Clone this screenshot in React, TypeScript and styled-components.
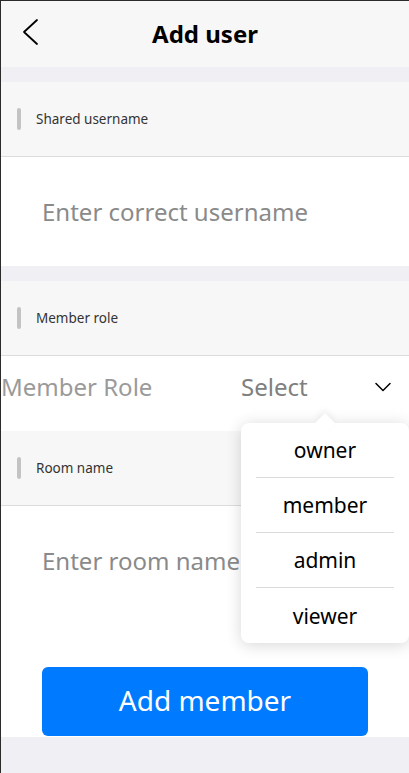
import React from "react";
import styled, { createGlobalStyle } from "styled-components";

const Global = createGlobalStyle`
  html, body { margin: 0; padding: 0; background: #ffffff; }
  body { font-family: "Noto Sans", "Open Sans", sans-serif; }
  * { box-sizing: border-box; }
`;

const Page = styled.div`
  width: 409px;
  height: 773px;
  display: flex;
  flex-direction: column;
  border-left: 1px solid #2b2b2b;
  border-top: 1px solid #2b2b2b;
  background: #efeff4;
  overflow: hidden;
`;

const Header = styled.header`
  height: 66px;
  flex: none;
  background: #f7f7f7;
  display: grid;
  grid-template-columns: 60px 1fr 60px;
  align-items: center;
`;

const BackButton = styled.button`
  border: none;
  background: none;
  padding: 0 0 0 20px;
  height: 100%;
  display: flex;
  align-items: center;
  margin-top: -4px;
`;

const Title = styled.h1`
  margin: 0;
  text-align: center;
  font-size: 24px;
  font-weight: 700;
  color: #000;
  margin-top: -1px;
`;

const Gap = styled.div`
  height: 15px;
  flex: none;
  background: #efeff4;
`;

const SectionHeader = styled.div`
  height: 75px;
  flex: none;
  background: #f7f7f7;
  border-bottom: 1px solid #dcdcdc;
  display: flex;
  align-items: center;
  padding-left: 16px;
  gap: 15px;
  font-size: 13.5px;
  color: #333;
`;

const Marker = styled.span`
  width: 4px;
  height: 22px;
  border-radius: 2px;
  background: #c3c3c3;
`;

const InputRow = styled.div`
  height: 109px;
  flex: none;
  background: #fff;
  display: flex;
  align-items: center;
  padding-left: 41px;
  font-size: 24px;
  color: #8a8a8a;
  white-space: nowrap;
`;

const SelectRow = styled.div`
  position: relative;
  height: 75px;
  flex: none;
  background: #fff;
  display: flex;
  align-items: flex-start;
  padding: 0 18px 0 0;
  z-index: 2;
`;

const SelectLine = styled.div`
  height: 60px;
  width: 100%;
  display: flex;
  align-items: center;
  font-size: 24px;
`;

const RoleLabel = styled.span`
  color: #9a9a9a;
  width: 240px;
`;

const SelectValue = styled.span`
  color: #808080;
  flex: 1;
`;

const Chevron = styled.svg`
  margin-top: 2px;
`;

const Popup = styled.div`
  position: absolute;
  top: 67px;
  right: 0;
  width: 168px;
  height: 220px;
  background: #fff;
  border-radius: 8px;
  box-shadow: 0 2px 16px rgba(0, 0, 0, 0.16);
  display: flex;
  flex-direction: column;
  padding: 0 15px;

  &::before {
    content: "";
    position: absolute;
    top: -7px;
    left: 77px;
    width: 14px;
    height: 14px;
    background: #fff;
    transform: rotate(45deg);
    box-shadow: -3px -3px 6px rgba(0, 0, 0, 0.05);
  }
`;

const Option = styled.div<{ $last?: boolean }>`
  position: relative;
  height: 55px;
  flex: none;
  display: flex;
  align-items: center;
  justify-content: center;
  font-size: 21px;
  color: #000;
  border-bottom: ${(p) => (p.$last ? "none" : "1.5px solid #dadada")};
`;

const ButtonArea = styled.div`
  flex: none;
  height: 122px;
  background: #fff;
  padding: 52px 40px 0 41px;
`;

const PrimaryButton = styled.button`
  width: 326px;
  height: 69px;
  border: none;
  border-radius: 6px;
  background: #007aff;
  color: #fff;
  font-family: inherit;
  font-size: 28px;
  display: flex;
  align-items: center;
  justify-content: center;
  padding: 0 0 4px;
`;

const Footer = styled.div`
  flex: 1;
  background: #efeff4;
`;

export default function App() {
  return (
    <>
      <Global />
      <Page>
        <Header>
          <BackButton aria-label="back">
            <svg width="18" height="28" viewBox="0 0 18 28" fill="none">
              <path d="M16 2 L3 14 L16 26" stroke="#000" strokeWidth="1.8" strokeLinecap="round" strokeLinejoin="round" />
            </svg>
          </BackButton>
          <Title>Add user</Title>
          <span />
        </Header>
        <Gap />
        <SectionHeader>
          <Marker />
          Shared username
        </SectionHeader>
        <InputRow>Enter correct username</InputRow>
        <Gap />
        <SectionHeader>
          <Marker />
          Member role
        </SectionHeader>
        <SelectRow>
          <SelectLine>
            <RoleLabel>Member Role</RoleLabel>
            <SelectValue>Select</SelectValue>
            <Chevron width="16" height="10" viewBox="0 0 16 10" fill="none">
              <path d="M1 1.5 L8 8.5 L15 1.5" stroke="#000" strokeWidth="1.5" strokeLinecap="round" strokeLinejoin="round" />
            </Chevron>
          </SelectLine>
          <Popup>
            <Option>owner</Option>
            <Option>member</Option>
            <Option>admin</Option>
            <Option $last>viewer</Option>
          </Popup>
        </SelectRow>
        <SectionHeader>
          <Marker />
          Room name
        </SectionHeader>
        <InputRow>Enter room name</InputRow>
        <ButtonArea>
          <PrimaryButton>Add member</PrimaryButton>
        </ButtonArea>
        <Footer />
      </Page>
    </>
  );
}
